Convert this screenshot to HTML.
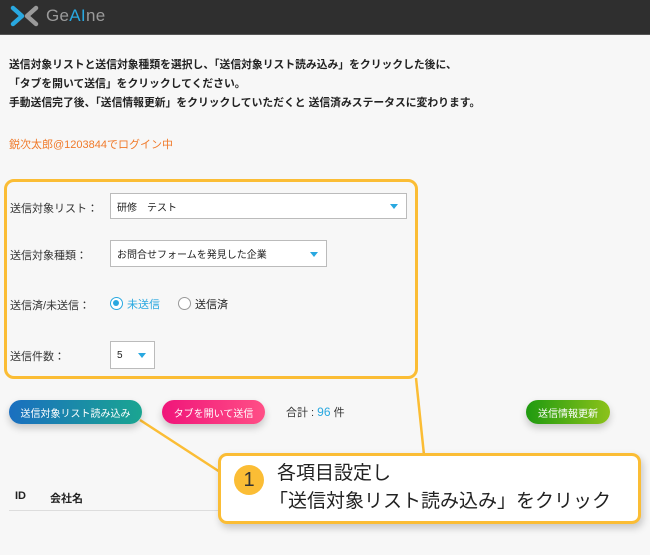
<!DOCTYPE html>
<html><head><meta charset="utf-8"><style>
*{margin:0;padding:0;box-sizing:border-box}
body{width:650px;height:555px;overflow:hidden;background:#f7f7f7;font-family:"Liberation Sans","Noto Sans CJK JP",sans-serif;color:#222;position:relative}
.hdr{position:absolute;left:0;top:0;width:650px;height:35px;background:#2f2f2f;border-bottom:1px solid #555}
.logo{position:absolute;left:46px;top:6px;font-size:17px;color:#9a9a9a;letter-spacing:0.3px}
.t{position:absolute;left:9px;font-size:10.8px;font-weight:bold;white-space:nowrap}
.o{position:absolute;left:9px;top:136px;font-size:11px;color:#f07a2a}
.box{position:absolute;left:4px;top:179px;width:414px;height:200px;border:3px solid #fbbd35;border-radius:10px}
.lbl{position:absolute;left:10px;font-size:11px;color:#333}
.sel{position:absolute;background:#fff;border:1px solid #bbb;font-size:10px;padding-left:6px;display:flex;align-items:center}
.arr{position:absolute;right:8px;top:50%;margin-top:-2px;width:0;height:0;border-left:4px solid transparent;border-right:4px solid transparent;border-top:5px solid #29a8e0}
.btn{position:absolute;top:400px;height:24px;border-radius:12px;color:#fff;font-size:10px;display:flex;align-items:center;justify-content:center;box-shadow:0 4px 8px rgba(0,0,0,.2)}
.call{position:absolute;left:218px;top:453px;width:423px;height:71px;background:#fff;border:3px solid #fbbd35;border-radius:9px;box-shadow:2px 4px 8px rgba(0,0,0,.2)}
</style></head><body>
<div class="hdr">
<svg style="position:absolute;left:10px;top:4px" width="30" height="24" viewBox="0 0 30 24">
<path d="M3 4 L12 12 L3 20" stroke="#29a8e0" stroke-width="4.5" fill="none" stroke-linecap="round" stroke-linejoin="round"/>
<path d="M26 4 L17 12 L26 20" stroke="#9a9a9a" stroke-width="4.5" fill="none" stroke-linecap="round" stroke-linejoin="round"/>
</svg>
<div class="logo">Ge<span style="color:#29a8e0">AI</span>ne</div>
</div>
<div class="t" style="top:56px">送信対象リストと送信対象種類を選択し、「送信対象リスト読み込み」をクリックした後に、</div>
<div class="t" style="top:75px">「タブを開いて送信」をクリックしてください。</div>
<div class="t" style="top:94px">手動送信完了後、「送信情報更新」をクリックしていただくと 送信済みステータスに変わります。</div>
<div class="o">鋭次太郎@1203844でログイン中</div>
<div class="box"></div>
<div class="lbl" style="top:200px">送信対象リスト：</div>
<div class="sel" style="left:110px;top:193px;width:297px;height:26px">研修　テスト<span class="arr"></span></div>
<div class="lbl" style="top:247px">送信対象種類：</div>
<div class="sel" style="left:110px;top:240px;width:217px;height:27px">お問合せフォームを発見した企業<span class="arr"></span></div>
<div class="lbl" style="top:297px">送信済/未送信：</div>
<div style="position:absolute;left:110px;top:297px;width:13px;height:13px;border-radius:50%;border:1.5px solid #29a8e0;background:#fff"><div style="position:absolute;left:2px;top:2px;width:6px;height:6px;border-radius:50%;background:#29a8e0"></div></div>
<div style="position:absolute;left:127px;top:296px;font-size:11px;color:#29a8e0">未送信</div>
<div style="position:absolute;left:178px;top:297px;width:13px;height:13px;border-radius:50%;border:1px solid #999;background:#fff"></div>
<div style="position:absolute;left:195px;top:296px;font-size:11px">送信済</div>
<div class="lbl" style="top:348px">送信件数：</div>
<div class="sel" style="left:110px;top:341px;width:45px;height:28px">5<span class="arr"></span></div>
<svg style="position:absolute;left:0;top:0" width="650" height="555">
<path d="M140 420 L220 472" stroke="#fbbd35" stroke-width="2.5"/>
<path d="M416 378 L424 455" stroke="#fbbd35" stroke-width="2.5"/>
</svg>
<div class="btn" style="left:9px;width:133px;background:linear-gradient(90deg,#1a6fc0,#1aa591)">送信対象リスト読み込み</div>
<div class="btn" style="left:162px;width:103px;background:linear-gradient(90deg,#f0157a,#ff4f86)">タブを開いて送信</div>
<div style="position:absolute;left:286px;top:404px;font-size:11px;color:#333">合計 : <span style="color:#29a8e0;font-size:12px">96</span> 件</div>
<div class="btn" style="left:526px;width:84px;background:linear-gradient(90deg,#1f9a10,#8cc21a)">送信情報更新</div>
<div style="position:absolute;left:15px;top:490px;font-size:11px;font-weight:bold">ID</div>
<div style="position:absolute;left:50px;top:490px;font-size:11px;font-weight:bold">会社名</div>
<div style="position:absolute;left:9px;top:510px;width:215px;height:1px;background:#ddd"></div>
<div class="call">
<div style="position:absolute;left:13px;top:9px;width:30px;height:30px;border-radius:50%;background:#fbbd35;font-size:20px;text-align:center;line-height:30px;color:#333">1</div>
<div style="position:absolute;left:56px;top:4px;font-size:19px;line-height:28px;color:#222;white-space:nowrap">各項目設定し<br><span style="margin-left:-8px">「送信対象リスト読み込み」をクリック</span></div>
</div>
</body></html>
